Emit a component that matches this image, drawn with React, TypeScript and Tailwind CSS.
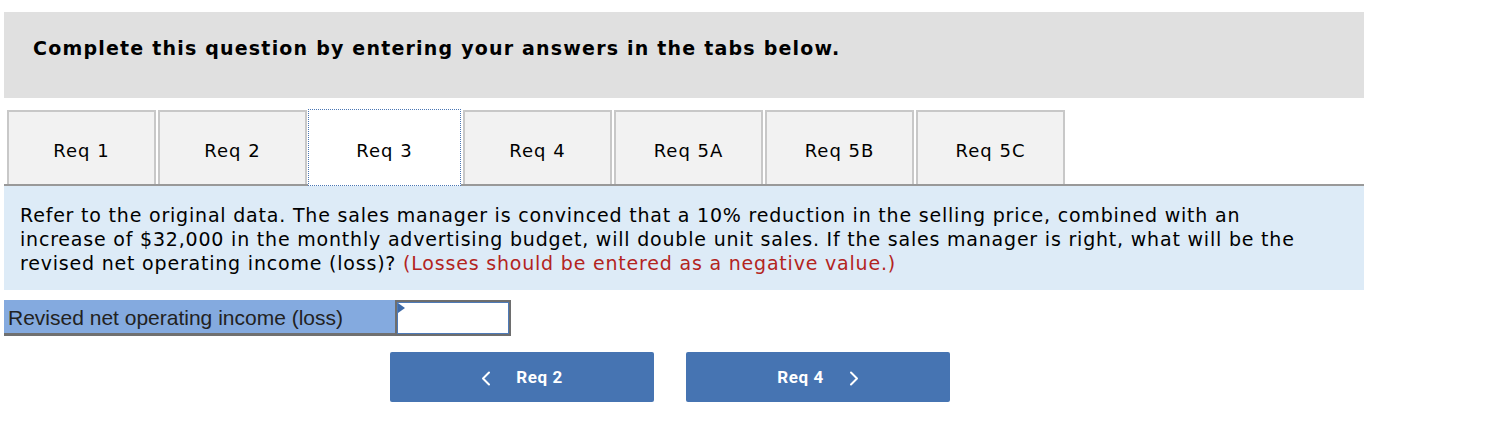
import React from "react";

const tabs = ["Req 1", "Req 2", "Req 3", "Req 4", "Req 5A", "Req 5B", "Req 5C"];
const activeTab = 2;

const Chevron = ({ dir }: { dir: "left" | "right" }) => (
  <svg width="10" height="15" viewBox="0 0 10 15" fill="none">
    <polyline
      points={dir === "left" ? "8,1.5 2,7.5 8,13.5" : "2,1.5 8,7.5 2,13.5"}
      stroke="white"
      strokeWidth="2"
      strokeLinecap="round"
      strokeLinejoin="round"
    />
  </svg>
);

export default function App() {
  return (
    <div className="ml-1 w-[1360px] pt-3 font-['DejaVu_Sans',Verdana,sans-serif] text-black">
      <div className="h-[86px] bg-[#e0e0e0] pl-[29px] pt-[24px]">
        <h2 className="text-[19px] font-bold leading-[24px] tracking-[1.2px]">
          Complete this question by entering your answers in the tabs below.
        </h2>
      </div>

      <div className="mt-3 flex border-b-2 border-[#999999] pl-[3px]">
        {tabs.map((tab, i) =>
          i === activeTab ? (
            <div
              key={tab}
              className="relative z-10 -mb-[2px] -ml-px -mt-px mr-[2px] flex h-[77px] w-[153px] items-center justify-center border border-dotted border-[#4a76b4] bg-white pt-[5px] text-[18px] tracking-[1px]"
            >
              {tab}
            </div>
          ) : (
            <div
              key={tab}
              className="mr-[2px] flex h-[74px] w-[149px] items-center justify-center border-2 border-b-0 border-[#c8c8c8] bg-[#f2f2f2] pt-[5px] text-[18px] tracking-[1px]"
            >
              {tab}
            </div>
          ),
        )}
      </div>

      <div className="bg-[#ddebf7] pb-[15px] pl-4 pr-4 pt-[17px] text-[19px] leading-[24px] tracking-[0.8px]">
        Refer to the original data. The sales manager is convinced that a 10%
        reduction in the selling price, combined with an
        <br />
        increase of $32,000 in the monthly advertising budget, will double unit
        sales. If the sales manager is right, what will be the
        <br />
        revised net operating income (loss)?{" "}
        <span className="text-[#b3241e]">
          (Losses should be entered as a negative value.)
        </span>
      </div>

      <div className="mt-[10px] flex h-[36px]">
        <div className="flex w-[391px] items-center border-b-[3px] border-[#707070] bg-[#84aadf] pl-1 pt-[3px] font-['Liberation_Sans',Arial,sans-serif] text-[21px] text-[#222]">
          Revised net operating income (loss)
        </div>
        <div className="relative w-[116px] border-2 border-[#6e6e6e]">
          <div className="h-full w-full border border-[#4d7ab8] bg-white" />
          <div className="absolute left-px top-px h-0 w-0 border-y-[5px] border-l-[7px] border-y-transparent border-l-[#3e6aa8]" />
        </div>
      </div>

      <div className="mt-4 flex gap-8 pl-[386px] font-['Roboto',sans-serif] text-[17px] font-bold tracking-[0.6px] text-white">
        <button className="flex h-[50px] w-[264px] items-center justify-center gap-[25px] rounded-[2px] bg-[#4674b2] pt-[2px]">
          <Chevron dir="left" />
          <span>Req 2</span>
        </button>
        <button className="flex h-[50px] w-[264px] items-center justify-center gap-[25px] rounded-[2px] bg-[#4674b2] pt-[2px]">
          <span>Req 4</span>
          <Chevron dir="right" />
        </button>
      </div>
    </div>
  );
}
